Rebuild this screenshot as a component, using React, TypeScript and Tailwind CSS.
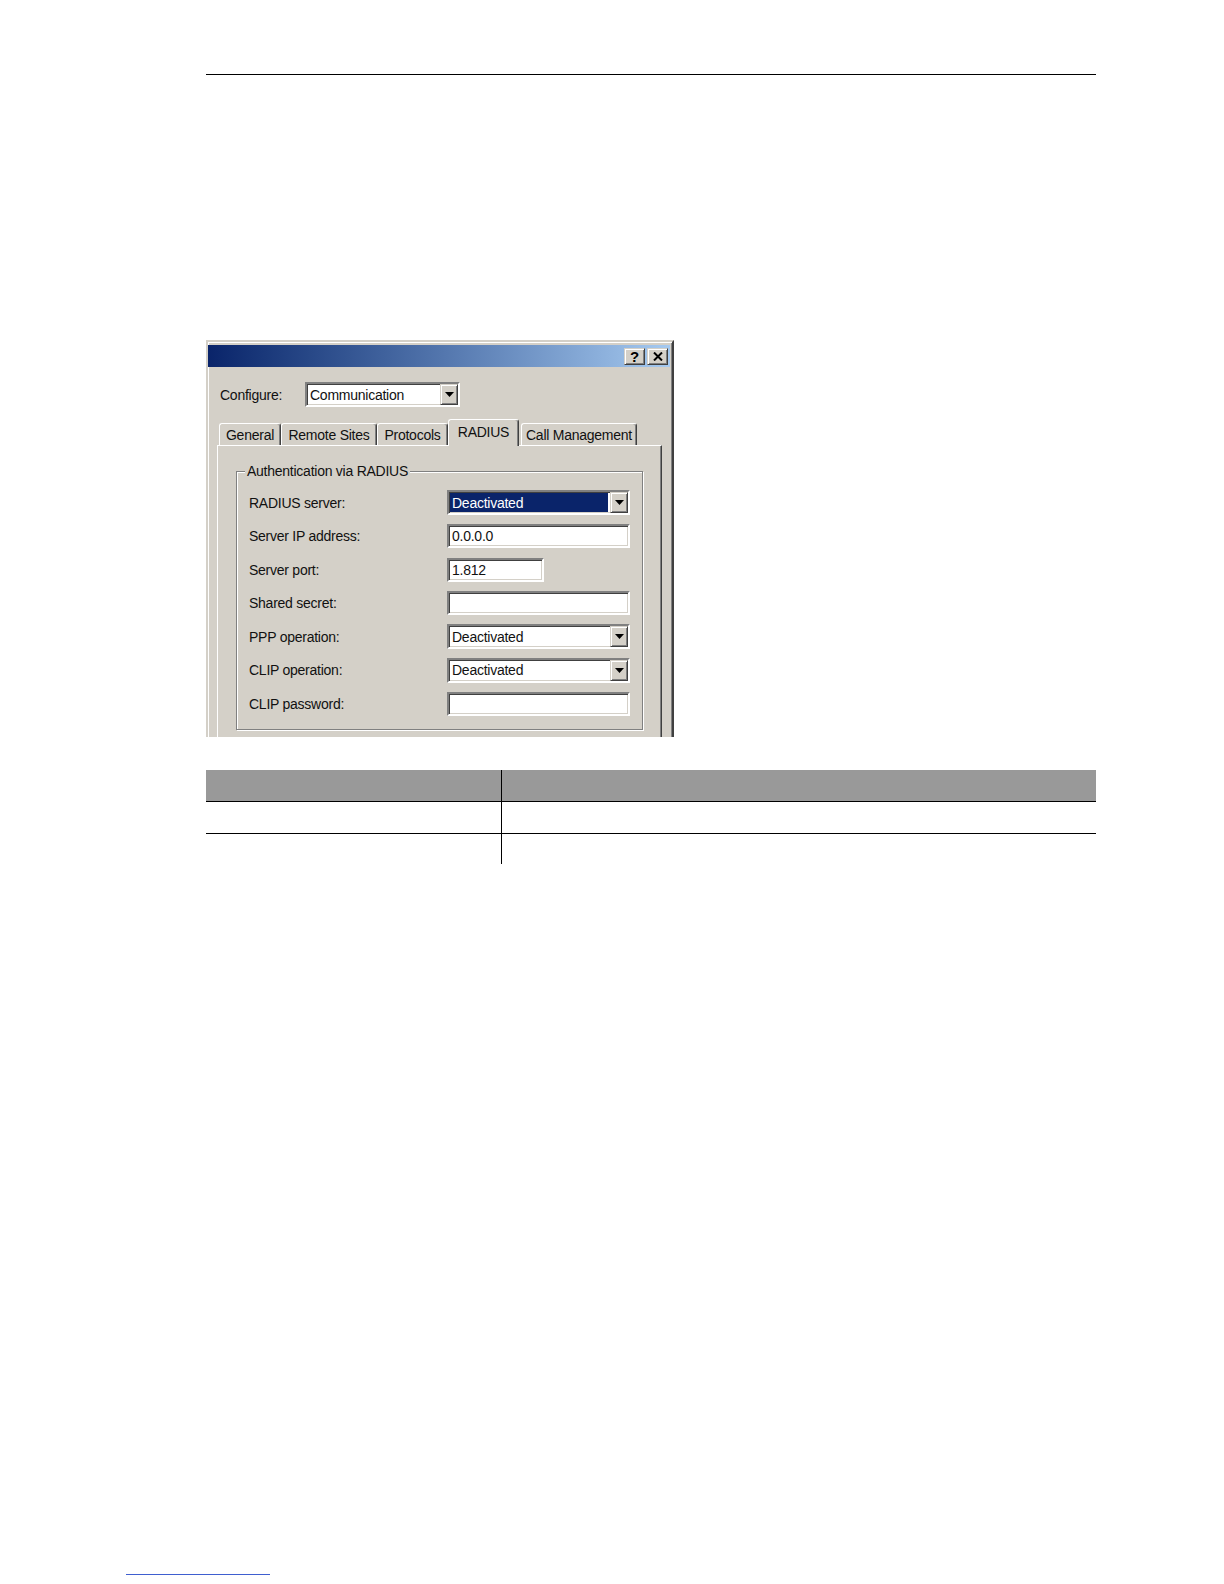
import React from 'react';

const SUNKEN =
  'border-2 border-t-[#808080] border-l-[#808080] border-b-white border-r-white shadow-[inset_1px_1px_0_#404040,inset_-1px_-1px_0_#d4d0c8]';
const RAISED =
  'border border-t-[#d4d0c8] border-l-[#d4d0c8] border-b-[#404040] border-r-[#404040] shadow-[inset_1px_1px_0_#fff,inset_-1px_-1px_0_#808080]';

function Arrow() {
  return (
    <svg width="9" height="5" viewBox="0 0 9 5" className="block">
      <polygon points="0,0 9,0 4.5,5" fill="#000" />
    </svg>
  );
}

interface ComboProps {
  value: string;
  className: string;
  selected?: boolean;
}

function Combo({ value, className, selected = false }: ComboProps) {
  return (
    <div className={`${SUNKEN} ${className} h-[25px] bg-white flex items-stretch`}>
      <div className="flex-1 flex items-center pl-[1px] min-w-0">
        {selected ? (
          <span className="h-[19px] flex-1 mr-[2px] flex items-center pl-[2px] bg-[#0a246a] text-white">{value}</span>
        ) : (
          <span className="pl-[2px]">{value}</span>
        )}
      </div>
      <div className={`${RAISED} w-[18px] bg-[#d4d0c8] flex items-center justify-center`}>
        <Arrow />
      </div>
    </div>
  );
}

function TextBox({ value = '', className }: { value?: string; className: string }) {
  return (
    <div className={`${SUNKEN} ${className} h-[24px] bg-white flex items-center pl-[3px]`}>
      {value}
    </div>
  );
}

interface TabProps {
  label: string;
  w: string;
  active?: boolean;
}

function Tab({ label, w, active = false }: TabProps) {
  const base =
    'flex items-center justify-center rounded-t-[3px] bg-[#d4d0c8] border-t border-l border-r border-t-white border-l-white border-r-[#404040] shadow-[inset_-1px_0_0_#808080]';
  return active ? (
    <div className={`${base} ${w} h-[27px] -mb-px relative z-10 pb-[2px]`}>{label}</div>
  ) : (
    <div className={`${base} ${w} h-[22px]`}>{label}</div>
  );
}

const rows: { label: string; field: React.ReactNode }[] = [
  { label: 'RADIUS server:', field: <Combo value="Deactivated" className="w-[183px]" selected /> },
  { label: 'Server IP address:', field: <TextBox value="0.0.0.0" className="w-[183px]" /> },
  { label: 'Server port:', field: <TextBox value="1.812" className="w-[97px]" /> },
  { label: 'Shared secret:', field: <TextBox className="w-[183px]" /> },
  { label: 'PPP operation:', field: <Combo value="Deactivated" className="w-[183px]" /> },
  { label: 'CLIP operation:', field: <Combo value="Deactivated" className="w-[183px]" /> },
  { label: 'CLIP password:', field: <TextBox className="w-[183px]" /> },
];

function Dialog() {
  return (
    <div className="ml-[206px] mt-[265px] w-[468px] h-[397px] overflow-hidden bg-[#d4d0c8] border-t-2 border-l-2 border-r-2 border-t-[#d4d0c8] border-l-[#d4d0c8] border-r-[#404040] shadow-[inset_1px_1px_0_#fff,inset_-1px_0_0_#808080] text-[14px] tracking-[-0.25px] text-[#111] font-['Liberation_Sans',Arial,sans-serif] leading-none">
      {/* title bar */}
      <div className="mt-[3px] mr-[2px] h-[22px] bg-linear-to-r from-[#0a246a] to-[#a6caf0] flex justify-end items-start pt-[3px] pr-[2px] gap-[2px]">
        <div className={`${RAISED} w-[21px] h-[17px] bg-[#d4d0c8] flex items-center justify-center text-[15px] font-bold tracking-normal text-black`}>
          ?
        </div>
        <div className={`${RAISED} w-[21px] h-[17px] bg-[#d4d0c8] flex items-center justify-center`}>
          <svg width="10" height="9" viewBox="0 0 10 9" className="block">
            <path d="M1 0.5 L9 8.5 M9 0.5 L1 8.5" stroke="#000" strokeWidth="2" fill="none" />
          </svg>
        </div>
      </div>

      {/* configure row */}
      <div className="mt-[15px] flex items-center">
        <span className="ml-[12px] w-[85px]">Configure:</span>
        <Combo value="Communication" className="w-[155px]" />
      </div>

      {/* tabs */}
      <div className="mt-[12px] ml-[11px] h-[26px] flex items-end">
        <Tab label="General" w="w-[62px]" />
        <Tab label="Remote Sites" w="w-[96px]" />
        <Tab label="Protocols" w="w-[71px]" />
        <Tab label="RADIUS" w="w-[71px]" active />
        <div className="w-[2px]" />
        <Tab label="Call Management" w="w-[116px]" />
      </div>

      {/* tab panel */}
      <div className="ml-[9px] w-[445px] h-[320px] border-t border-l border-r border-t-white border-l-white border-r-[#404040] shadow-[inset_-1px_0_0_#808080]">
        <div className="relative mt-[25px] ml-[18px] w-[407px] h-[259px] border border-[#808080] shadow-[1px_1px_0_#fff,inset_1px_1px_0_#fff]">
          <span className="absolute -top-[8px] left-[8px] px-[2px] bg-[#d4d0c8]">Authentication via RADIUS</span>
          <div className="pt-[18px] flex flex-col gap-[8.5px]">
            {rows.map((r) => (
              <div key={r.label} className="h-[25px] flex items-center">
                <span className="ml-[12px] w-[198px]">{r.label}</span>
                {r.field}
              </div>
            ))}
          </div>
        </div>
      </div>
    </div>
  );
}

function ParamTable() {
  return (
    <div className="ml-[206px] mt-[33px] w-[890px] flex flex-col">
      <div className="h-[31px] flex bg-[#999999]">
        <div className="w-[296px] border-r border-black" />
        <div className="flex-1" />
      </div>
      <div className="h-[32px] flex border-t border-black">
        <div className="w-[296px] border-r border-black" />
        <div className="flex-1" />
      </div>
      <div className="h-[31px] flex border-t border-black">
        <div className="w-[296px] border-r border-black" />
        <div className="flex-1" />
      </div>
    </div>
  );
}

export default function App() {
  return (
    <div className="w-[1224px] h-[1584px] bg-white overflow-hidden flex flex-col">
      <div className="mt-[74px] ml-[206px] w-[890px] h-px bg-black" />
      <Dialog />
      <ParamTable />
      <div className="mt-[710px] ml-[126px] w-[144px] h-px bg-[#3f5fd0]" />
    </div>
  );
}
